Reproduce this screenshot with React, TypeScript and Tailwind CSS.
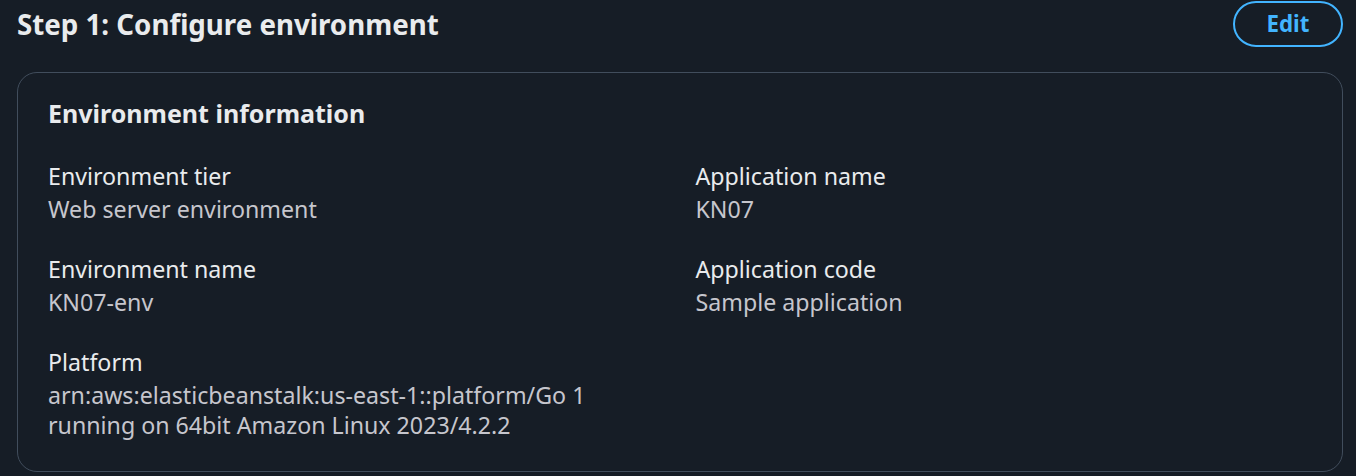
import React from "react";

const Field = ({ label, value }: { label: string; value: React.ReactNode }) => (
  <div className="flex flex-col">
    <div className="text-[23.2px] leading-[30px] text-[#e9ebed]">{label}</div>
    <div className="mt-[3px] text-[23.2px] leading-[30px] text-[#c6c6cd]">{value}</div>
  </div>
);

export default function App() {
  return (
    <div
      className="w-full h-[476px] bg-[#161d26] pl-[17px] pr-[13px] overflow-hidden"
      style={{ fontFamily: '"Noto Sans", "Open Sans", sans-serif' }}
    >
      <div className="flex h-[47px] items-center justify-between">
        <h1 className="text-[27.7px] font-bold leading-[34px] text-[#e9ebed]">Step 1: Configure environment</h1>
        <button className="flex h-[46px] w-[110px] items-center justify-center rounded-full border-2 border-[#42b4ff] text-[22.3px] font-bold text-[#42b4ff]">
          Edit
        </button>
      </div>
      <div className="mt-[25px] rounded-[20px] border border-[#414d5c] pl-[30px] pr-[31px] pt-[23px] pb-[31px]">
        <h2 className="text-[25px] font-bold leading-[34px] text-[#e9ebed]">Environment information</h2>
        <div className="mt-[31px] grid grid-cols-2 gap-x-[32px] gap-y-[30px]">
          <Field label="Environment tier" value="Web server environment" />
          <Field label="Application name" value="KN07" />
          <Field label="Environment name" value="KN07-env" />
          <Field label="Application code" value="Sample application" />
          <Field
            label="Platform"
            value={
              <>
                arn:aws:elasticbeanstalk:us-east-1::platform/Go 1
                <br />
                running on 64bit Amazon Linux 2023/4.2.2
              </>
            }
          />
        </div>
      </div>
    </div>
  );
}
